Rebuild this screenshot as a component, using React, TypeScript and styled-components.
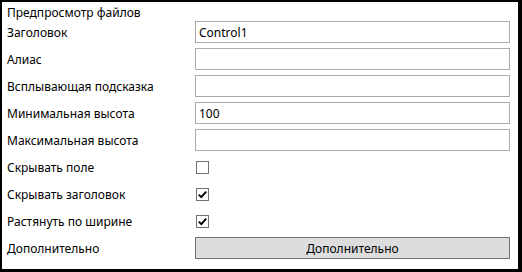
import React from 'react'
import styled, { createGlobalStyle } from 'styled-components'

const GlobalStyle = createGlobalStyle`
  html, body {
    margin: 0;
    padding: 0;
    background: #ffffff;
  }
  body {
    font-family: "Noto Sans", "Open Sans", sans-serif;
    font-size: 12px;
    color: #000000;
  }
`

const fields = [
  { label: 'Заголовок', kind: 'text', value: 'Control1' },
  { label: 'Алиас', kind: 'text', value: '' },
  { label: 'Всплывающая подсказка', kind: 'text', value: '' },
  { label: 'Минимальная высота', kind: 'text', value: '100' },
  { label: 'Максимальная высота', kind: 'text', value: '' },
  { label: 'Скрывать поле', kind: 'check', value: false },
  { label: 'Скрывать заголовок', kind: 'check', value: true },
  { label: 'Растянуть по ширине', kind: 'check', value: true },
  { label: 'Дополнительно', kind: 'button', value: 'Дополнительно' },
]

export default function App() {
  return (
    <>
      <GlobalStyle />
      <Frame>
        <Title>Предпросмотр файлов</Title>
        <Form>
          {fields.map(f => (
            <React.Fragment key={f.label}>
              <Label>{f.label}</Label>
              <Cell>
                {f.kind === 'text' && <TextBox>{f.value as string}</TextBox>}
                {f.kind === 'check' && (
                  <CheckBox>
                    {f.value && (
                      <svg width="11" height="11" viewBox="0 0 11 11">
                        <path d="M1.8 5.6 L4.3 8.1 L9.2 2.6" fill="none" stroke="#000" strokeWidth="1.9" />
                      </svg>
                    )}
                  </CheckBox>
                )}
                {f.kind === 'button' && <Button>{f.value as string}</Button>}
              </Cell>
            </React.Fragment>
          ))}
        </Form>
      </Frame>
    </>
  )
}

const Frame = styled.div`
  box-sizing: border-box;
  width: 522px;
  height: 272px;
  border-style: solid;
  border-color: #000000;
  border-width: 2px 4px 3px 2px;
  padding: 3px 8px 0 5px;
  background: #ffffff;
`

const Title = styled.div`
  height: 16px;
  line-height: 16px;
`

const Form = styled.div`
  display: grid;
  grid-template-columns: 188px 1fr;
  grid-auto-rows: 22px;
  row-gap: 5px;
`

const Label = styled.div`
  display: flex;
  align-items: center;
  white-space: nowrap;
`

const Cell = styled.div`
  display: flex;
  align-items: center;
`

const TextBox = styled.div`
  box-sizing: border-box;
  width: 100%;
  height: 22px;
  border: 1px solid #ababab;
  padding: 0 3px;
  display: flex;
  align-items: center;
`

const CheckBox = styled.div`
  box-sizing: border-box;
  width: 13px;
  height: 13px;
  margin-left: 1px;
  border: 1px solid #707070;
  background: #ffffff;
  display: flex;
  align-items: center;
  justify-content: center;
`

const Button = styled.div`
  box-sizing: border-box;
  width: calc(100% + 1px);
  height: 22px;
  border: 1px solid #707070;
  background: #dddddd;
  display: flex;
  align-items: center;
  justify-content: center;
`
